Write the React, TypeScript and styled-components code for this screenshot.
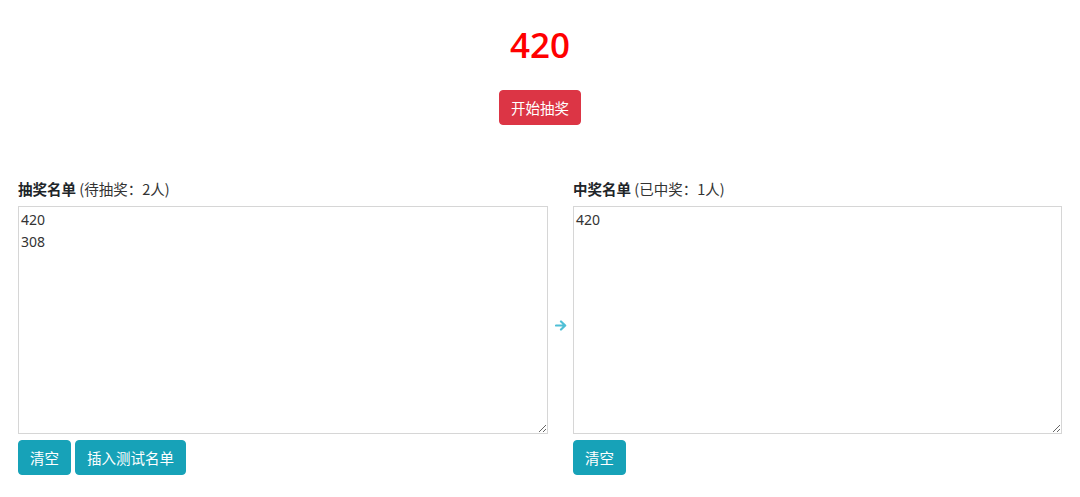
import React from "react";
import styled, { createGlobalStyle } from "styled-components";

const Global = createGlobalStyle`
  html, body { margin: 0; padding: 0; background: #fff; }
  body { font-family: "Noto Sans", "Noto Sans CJK SC", sans-serif; color: #212529; }
`;

const Page = styled.div`
  padding: 0 18px;
  display: flex;
  flex-direction: column;
`;

const Top = styled.div`
  display: flex;
  flex-direction: column;
  align-items: center;
  padding-top: 22px;
`;

const Winner = styled.div`
  font-family: "Open Sans", "Noto Sans", sans-serif;
  font-size: 35px;
  font-weight: 600;
  color: #ff0000;
  line-height: 46px;
`;

const Btn = styled.button<{ $variant: "danger" | "info" }>`
  font-family: "Noto Sans CJK SC", sans-serif;
  font-size: 14.5px;
  line-height: 21px;
  padding: 6px 11px;
  border-radius: 4px;
  border: 1px solid ${(p) => (p.$variant === "danger" ? "#dc3545" : "#17a2b8")};
  background: ${(p) => (p.$variant === "danger" ? "#dc3545" : "#17a2b8")};
  color: #fff;
  cursor: pointer;
`;

const StartBtn = styled(Btn)`
  margin-top: 22px;
`;

const Lists = styled.div`
  margin-top: 53px;
  display: flex;
  align-items: stretch;
`;

const Column = styled.div<{ $w: number }>`
  width: ${(p) => p.$w}px;
  display: flex;
  flex-direction: column;
`;

const Label = styled.div`
  font-family: "Noto Sans CJK SC", sans-serif;
  font-size: 14.5px;
  line-height: 21px;
  margin-bottom: 7px;
  color: #212529;
  b { font-weight: 700; }
  span { color: #333; }
`;

const Area = styled.textarea`
  box-sizing: border-box;
  width: 100%;
  height: 228px;
  margin: 0;
  padding: 2px 2px;
  border: 1px solid #d6d6d6;
  font-family: "Noto Sans", "Noto Sans CJK SC", sans-serif;
  font-size: 14px;
  line-height: 22px;
  color: #333;
  outline: none;
`;

const Buttons = styled.div`
  display: flex;
  gap: 4px;
  margin-top: 6px;
`;

const ArrowCol = styled.div`
  width: 25px;
  display: flex;
  align-items: center;
  justify-content: center;
  padding-bottom: 3px;
  box-sizing: border-box;
`;

export default function App() {
  return (
    <>
      <Global />
      <Page>
        <Top>
          <Winner>420</Winner>
          <StartBtn $variant="danger">开始抽奖</StartBtn>
        </Top>
        <Lists>
          <Column $w={530}>
            <Label>
              <b>抽奖名单</b> <span>(待抽奖：2人)</span>
            </Label>
            <Area defaultValue={"420\n308"} />
            <Buttons>
              <Btn $variant="info">清空</Btn>
              <Btn $variant="info">插入测试名单</Btn>
            </Buttons>
          </Column>
          <ArrowCol>
            <svg width="12" height="11" viewBox="0 0 12 11">
              <path d="M1 5.5 H9.5 M6 1.5 L10.2 5.5 L6 9.5" stroke="#4fbfd6" strokeWidth="2.2" fill="none" strokeLinecap="round" strokeLinejoin="round" />
            </svg>
          </ArrowCol>
          <Column $w={489}>
            <Label>
              <b>中奖名单</b> <span>(已中奖：1人)</span>
            </Label>
            <Area defaultValue={"420"} />
            <Buttons>
              <Btn $variant="info">清空</Btn>
            </Buttons>
          </Column>
        </Lists>
      </Page>
    </>
  );
}
